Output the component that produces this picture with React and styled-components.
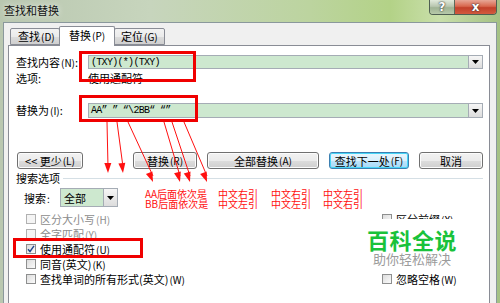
import React from "react";
import styled, { createGlobalStyle } from "styled-components";

const GlobalStyle = createGlobalStyle`
  html, body {
    margin: 0;
    padding: 0;
    width: 500px;
    height: 303px;
    overflow: hidden;
    background: #ffffff;
  }
  body {
    font-family: "Noto Sans CJK SC", "DejaVu Sans", sans-serif;
    font-size: 11px;
    color: #000;
  }
`;

const CJK = `"Noto Sans CJK SC", "DejaVu Sans", sans-serif`;

const Window = styled.div`
  position: relative;
  width: 500px;
  height: 303px;
  display: flex;
  flex-direction: column;
  background: linear-gradient(90deg, #b9c7b0 0%, #c7d5bd 30%, #bcd49f 62%, #b3d287 78%, #c9dfaa 88%, #a4c184 100%);
  overflow: hidden;
`;

const TitleBar = styled.div`
  height: 22px;
  flex: none;
  display: flex;
  align-items: flex-start;
  padding-left: 4px;
`;

const Title = styled.span`
  margin-top: 3px;
  font-size: 11px;
  line-height: 15px;
  color: #111;
  text-shadow: 0 0 6px rgba(255, 255, 255, 0.9);
`;

const Caption = styled.div`
  margin-left: auto;
  margin-right: 3px;
  display: flex;
  height: 14px;
  border: 1px solid #4f5f52;
  border-top: none;
  border-radius: 0 0 4px 4px;
  overflow: hidden;
`;

const CaptionButton = styled.div`
  width: ${(p) => p.w}px;
  display: flex;
  align-items: center;
  justify-content: center;
  font-family: "DejaVu Sans", sans-serif;
  font-weight: bold;
  font-size: 12px;
  line-height: 12px;
  color: #fff;
  text-shadow: 0 0 1px #333, 0 0 2px #333;
  background: ${(p) =>
    p.close
      ? "linear-gradient(180deg, #e7a796 0%, #d8674e 45%, #c2402a 55%, #d25a3f 100%)"
      : "linear-gradient(180deg, #e2eadb 0%, #b9c7b0 45%, #9fb394 55%, #b7c9aa 100%)"};
  & + & {
    border-left: 1px solid #5b6a5b;
  }
`;

const Client = styled.div`
  flex: 1;
  margin: 0 3px;
  border: 1px solid #8a989c;
  border-bottom: none;
  background: #f0f0f0;
  padding: 3px 6px 0 4px;
  display: flex;
  flex-direction: column;
`;

const TabRow = styled.div`
  display: flex;
  align-items: flex-end;
  height: 19px;
  padding-left: 2px;
  position: relative;
  z-index: 1;
`;

const Tab = styled.div`
  width: ${(p) => p.w}px;
  height: ${(p) => (p.active ? 20 : 17)}px;
  margin-bottom: ${(p) => (p.active ? -1 : 0)}px;
  box-sizing: border-box;
  border: 1px solid #898c95;
  border-bottom: ${(p) => (p.active ? "none" : "1px solid #898c95")};
  border-radius: 2px 2px 0 0;
  background: ${(p) => (p.active ? "#ffffff" : "linear-gradient(180deg, #f2f2f2 0%, #ebebeb 50%, #dddddd 51%, #cfcfcf 100%)")};
  font-size: 11px;
  line-height: ${(p) => (p.active ? 17 : 15)}px;
  padding-left: ${(p) => p.pad}px;
  white-space: nowrap;
  & + & {
    margin-left: -1px;
  }
`;

const Panel = styled.div`
  flex: 1;
  width: 482px;
  box-sizing: border-box;
  border: 1px solid #898c95;
  border-bottom: none;
  background: #ffffff;
  padding: 9px 6px 0 7px;
  display: flex;
  flex-direction: column;
`;

const FieldGrid = styled.div`
  display: grid;
  grid-template-columns: 72px 1fr;
  row-gap: 2px;
  margin-top: ${(p) => p.top || 0}px;
`;

const Label = styled.div`
  height: 14px;
  display: flex;
  align-items: center;
  font-size: 11px;
  white-space: nowrap;
`;

const Combo = styled.div`
  height: ${(p) => p.h}px;
  width: ${(p) => (p.w ? p.w + "px" : "auto")};
  box-sizing: border-box;
  border: 1px solid #a5acb5;
  background: #cde8cf;
  display: flex;
  align-items: center;
  font-family: ${(p) => (p.mono ? `"Liberation Mono", "Noto Sans CJK SC", monospace` : CJK)};
  font-size: ${(p) => (p.mono ? 10 : 11)}px;
  letter-spacing: ${(p) => (p.mono ? "-0.7px" : "0")};
  padding-left: ${(p) => (p.mono ? 2 : 3)}px;
  white-space: pre;
`;

const ComboText = styled.span`
  flex: 1;
`;

const DropButton = styled.div`
  width: 14px;
  align-self: stretch;
  box-sizing: border-box;
  border-left: 1px solid #a5acb5;
  background: linear-gradient(180deg, #f6f6f6, #dcdcdc);
  display: flex;
  align-items: center;
  justify-content: center;
`;

const Plain = styled.div`
  height: 14px;
  display: flex;
  align-items: center;
  font-size: 11px;
`;

const ButtonRow = styled.div`
  display: flex;
  margin-top: 34px;
  padding-left: 1px;
  gap: 10px;
`;

const Button = styled.div`
  width: ${(p) => p.w}px;
  height: 17px;
  box-sizing: border-box;
  border: 1px solid ${(p) => (p.def ? "#3c7fb1" : "#707070")};
  border-radius: 3px;
  background: ${(p) =>
    p.def
      ? "linear-gradient(180deg, #eaf6fd 0%, #d9f0fc 50%, #bee6fd 51%, #a7d9f5 100%)"
      : "linear-gradient(180deg, #f2f2f2 0%, #ebebeb 50%, #dddddd 51%, #cfcfcf 100%)"};
  box-shadow: ${(p) => (p.def ? "inset 0 0 0 1px #48d6f7" : "inset 0 0 0 1px #fcfcfc")};
  display: flex;
  align-items: center;
  justify-content: center;
  font-size: 11px;
  white-space: nowrap;
  margin-left: ${(p) => (p.push ? "auto" : "0")};
`;

const SectionHead = styled.div`
  margin-top: 3px;
  height: 12px;
  display: flex;
  align-items: center;
  gap: 3px;
  font-size: 11px;
  &::after {
    content: "";
    flex: 1;
    height: 1px;
    background: #d5dfe5;
  }
`;

const SearchRow = styled.div`
  margin-top: 4px;
  display: flex;
  align-items: center;
  padding-left: 8px;
`;

const SearchLabel = styled.div`
  width: 36px;
  font-size: 11px;
`;

const CheckGrid = styled.div`
  margin-top: 4px;
  padding-left: 10px;
  display: grid;
  grid-template-columns: 356px 1fr;
  grid-template-rows: repeat(5, 15px);
  grid-auto-flow: column;
`;

const CheckItem = styled.div`
  display: flex;
  align-items: center;
  gap: 4px;
  font-size: 11px;
  white-space: nowrap;
  color: ${(p) => (p.disabled ? "#8d8d8d" : "#000")};
`;

const Box = styled.span`
  width: 10px;
  height: 10px;
  flex: none;
  box-sizing: border-box;
  border: 1px solid ${(p) => (p.disabled ? "#b1b1b1" : "#8e8f8f")};
  background: ${(p) => (p.disabled ? "#f4f4f4" : "linear-gradient(135deg, #dcdcdc, #fbfbfb)")};
  display: flex;
  align-items: center;
  justify-content: center;
`;

const Mn = styled.span`
  font-size: 10px;
  margin-left: 1px;
`;

const RedFrame = styled.div`
  position: absolute;
  left: ${(p) => p.x}px;
  top: ${(p) => p.y}px;
  width: ${(p) => p.w}px;
  height: ${(p) => p.h}px;
  box-sizing: border-box;
  border: 3px solid #f00000;
  pointer-events: none;
`;

const Note = styled.div`
  position: absolute;
  left: ${(p) => p.x}px;
  top: ${(p) => p.y}px;
  color: #ff1010;
  font-size: 10px;
  line-height: 10px;
  white-space: nowrap;
`;

const ArrowLayer = styled.svg`
  position: absolute;
  left: 0;
  top: 0;
  pointer-events: none;
`;

const Watermark = styled.div`
  position: absolute;
  left: 360px;
  top: 219px;
  width: 104px;
  height: 55px;
  background: #ffffff;
  display: flex;
  flex-direction: column;
  align-items: center;
  justify-content: center;
`;

const WmMain = styled.div`
  font-size: 22px;
  line-height: 24px;
  font-weight: bold;
  color: #19c23a;
  letter-spacing: 0.5px;
`;

const WmSub = styled.div`
  font-size: 13px;
  line-height: 15px;
  color: #9b9b9b;
`;

const Caret = () => (
  <svg width="7" height="4" viewBox="0 0 7 4">
    <polygon points="0,0 7,0 3.5,4" fill="#000" />
  </svg>
);

const Check = ({ checked, disabled, children }) => (
  <CheckItem disabled={disabled}>
    <Box disabled={disabled}>
      {checked && (
        <svg width="8" height="8" viewBox="0 0 8 8">
          <path d="M1 4.2 L3 6.5 L7 0.8" stroke="#21468c" strokeWidth="1.4" fill="none" />
        </svg>
      )}
    </Box>
    <span>{children}</span>
  </CheckItem>
);

const arrows = [
  [107, 122, 108, 173],
  [117, 122, 123, 173],
  [128, 122, 153, 182],
  [164, 122, 180, 182],
  [172, 122, 190, 182],
  [184, 122, 207, 182],
];

const head = ([x1, y1, x2, y2]) => {
  const dx = x2 - x1;
  const dy = y2 - y1;
  const len = Math.hypot(dx, dy);
  const ux = dx / len;
  const uy = dy / len;
  const bx = x2 - ux * 10;
  const by = y2 - uy * 10;
  const px = -uy * 3.5;
  const py = ux * 3.5;
  return `${x2},${y2} ${bx + px},${by + py} ${bx - px},${by - py}`;
};

export default function App() {
  return (
    <>
      <GlobalStyle />
      <Window>
        <TitleBar>
          <Title>查找和替换</Title>
          <Caption>
            <CaptionButton w={24}>?</CaptionButton>
            <CaptionButton w={41} close>
              x
            </CaptionButton>
          </Caption>
        </TitleBar>
        <Client>
          <TabRow>
            <Tab w={50} pad={7}>
              查找<Mn>(D)</Mn>
            </Tab>
            <Tab w={56} pad={9} active>
              替换<Mn>(P)</Mn>
            </Tab>
            <Tab w={51} pad={6}>
              定位<Mn>(G)</Mn>
            </Tab>
          </TabRow>
          <Panel>
            <FieldGrid>
              <Label>
                查找内容<Mn>(N)</Mn>:
              </Label>
              <Combo h={14} mono>
                <ComboText>(TXY)(*)(TXY)</ComboText>
                <DropButton>
                  <Caret />
                </DropButton>
              </Combo>
              <Label>选项:</Label>
              <Plain>使用通配符</Plain>
            </FieldGrid>
            <FieldGrid top={18}>
              <Label>
                替换为<Mn>(I)</Mn>:
              </Label>
              <Combo h={15} mono>
                <ComboText>AA” ” “\2BB“ “”</ComboText>
                <DropButton>
                  <Caret />
                </DropButton>
              </Combo>
            </FieldGrid>
            <ButtonRow>
              <Button w={66}>
                &lt;&lt; 更少<Mn>(L)</Mn>
              </Button>
              <Button w={64} push>
                替换<Mn>(R)</Mn>
              </Button>
              <Button w={112}>
                全部替换<Mn>(A)</Mn>
              </Button>
              <Button w={80} def>
                查找下一处<Mn>(F)</Mn>
              </Button>
              <Button w={64}>取消</Button>
            </ButtonRow>
            <SectionHead>搜索选项</SectionHead>
            <SearchRow>
              <SearchLabel>
                搜索<Mn>:</Mn>
              </SearchLabel>
              <Combo h={19} w={58}>
                <ComboText>全部</ComboText>
                <DropButton>
                  <Caret />
                </DropButton>
              </Combo>
            </SearchRow>
            <CheckGrid>
              <Check disabled>
                区分大小写<Mn>(H)</Mn>
              </Check>
              <Check disabled>
                全字匹配<Mn>(Y)</Mn>
              </Check>
              <Check checked>
                使用通配符<Mn>(U)</Mn>
              </Check>
              <Check>
                同音(英文)<Mn>(K)</Mn>
              </Check>
              <Check>
                查找单词的所有形式(英文)<Mn>(W)</Mn>
              </Check>
              <Check>
                区分前缀<Mn>(X)</Mn>
              </Check>
              <span />
              <span />
              <span />
              <Check>
                忽略空格<Mn>(W)</Mn>
              </Check>
            </CheckGrid>
          </Panel>
        </Client>

        <RedFrame x={79} y={51} w={117} h={31} />
        <RedFrame x={79} y={95} w={119} h={27} />
        <RedFrame x={13} y={238} w={130} h={20} />

        <ArrowLayer width="500" height="303" viewBox="0 0 500 303">
          {arrows.map((a, i) => (
            <g key={i}>
              <line x1={a[0]} y1={a[1]} x2={a[2]} y2={a[3] - 6} stroke="#ff1010" strokeWidth="1" />
              <polygon points={head(a)} fill="#ff1010" />
            </g>
          ))}
        </ArrowLayer>

        <Note x={145} y={189}>
          AA后面依次是
          <br />
          BB后面依次是
        </Note>
        <Note x={218} y={189}>
          中文右引
          <br />
          中文左引
        </Note>
        <Note x={271} y={189}>
          中文右引
          <br />
          中文左引
        </Note>
        <Note x={323} y={189}>
          中文左引
          <br />
          中文右引
        </Note>

        <Watermark>
          <WmMain>百科全说</WmMain>
          <WmSub>助你轻松解决</WmSub>
        </Watermark>
      </Window>
    </>
  );
}
